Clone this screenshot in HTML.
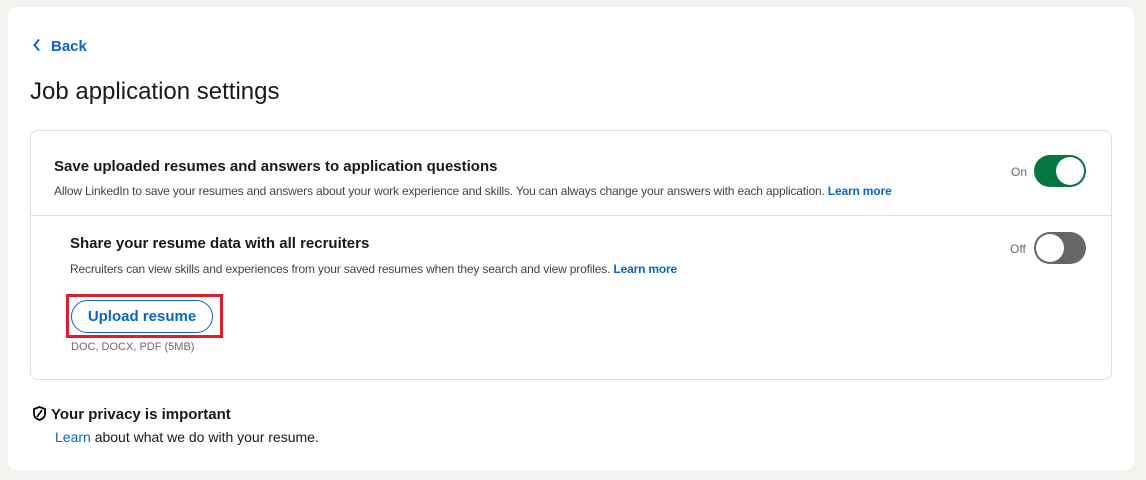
<!DOCTYPE html>
<html><head><meta charset="utf-8"><style>
*{box-sizing:border-box;margin:0;padding:0}
body{width:1146px;height:480px;background:#f4f2ee;font-family:"Liberation Sans",sans-serif;color:rgba(0,0,0,.9);position:relative;overflow:hidden}
.card{position:absolute;left:8px;top:7px;width:1126px;height:463px;background:#fff;border-radius:8px}
.abs{position:absolute;white-space:nowrap}
.back{left:32px;top:38px;color:#0a66c2;font-size:15px;font-weight:bold}
.title{left:30px;top:78px;font-size:24px;color:rgba(0,0,0,.9)}
.inner{position:absolute;left:30px;top:130px;width:1082px;height:250px;border:1px solid #e0dfdc;border-radius:8px}
.div{position:absolute;left:0;right:0;top:84px;border-top:1px solid #e0dfdc}
.h{font-size:15px;font-weight:bold;color:rgba(0,0,0,.9)}
.d{font-size:12px;color:rgba(0,0,0,.75);letter-spacing:-0.17px}
.d b{color:#0a66c2}
.tg{position:absolute;width:52px;height:32px;border-radius:16px}
.tg i{position:absolute;top:2px;width:28px;height:28px;border-radius:50%;background:#fff}
.lbl{font-size:12px;color:rgba(0,0,0,.6)}
</style></head><body>
<div class="card"></div>
<div class="abs back"><svg width="10" height="14" viewBox="0 0 10 14" style="vertical-align:-1px;margin-right:9px"><path d="M7 1.5 2.5 7 7 12.5" stroke="#0a66c2" stroke-width="2" fill="none"/></svg>Back</div>
<div class="abs title">Job application settings</div>
<div class="inner"><div class="div"></div></div>
<div class="abs h" style="left:54px;top:158px">Save uploaded resumes and answers to application questions</div>
<div class="abs d" style="left:54px;top:184px">Allow LinkedIn to save your resumes and answers about your work experience and skills. You can always change your answers with each application. <b>Learn more</b></div>
<div class="abs lbl" style="left:1011px;top:165px">On</div>
<div class="tg" style="left:1034px;top:155px;background:#057642"><i style="left:22px"></i></div>
<div class="abs h" style="left:70px;top:235px">Share your resume data with all recruiters</div>
<div class="abs d" style="left:70px;top:262px">Recruiters can view skills and experiences from your saved resumes when they search and view profiles. <b>Learn more</b></div>
<div class="abs lbl" style="left:1010px;top:242px">Off</div>
<div class="tg" style="left:1034px;top:232px;background:#666"><i style="left:2px"></i></div>
<div class="abs" style="left:66px;top:294px;width:157px;height:44px;border:3px solid #e01e2b"></div>
<div class="abs" style="left:71px;top:300px;width:142px;height:33px;border:1px solid #0a66c2;border-radius:17px;color:#0a66c2;font-weight:bold;font-size:15px;text-align:center;line-height:31px">Upload resume</div>
<div class="abs" style="left:71px;top:341px;font-size:11px;color:rgba(0,0,0,.6)">DOC, DOCX, PDF (5MB)</div>
<svg class="abs" style="left:33px;top:406px" width="13" height="15" viewBox="0 0 13 15"><path d="M6.5 1 12 3v5c0 3-2.5 5-5.5 6C3.5 13 1 11 1 8V3z" fill="none" stroke="#000" stroke-width="1.8"/><path d="M9 4 4 11" stroke="#000" stroke-width="1.6"/></svg>
<div class="abs h" style="left:51px;top:406px;font-weight:bold">Your privacy is important</div>
<div class="abs" style="left:55px;top:429px;font-size:14px;color:rgba(0,0,0,.9)"><span style="color:#0a66c2">Learn</span> about what we do with your resume.</div>
</body></html>
